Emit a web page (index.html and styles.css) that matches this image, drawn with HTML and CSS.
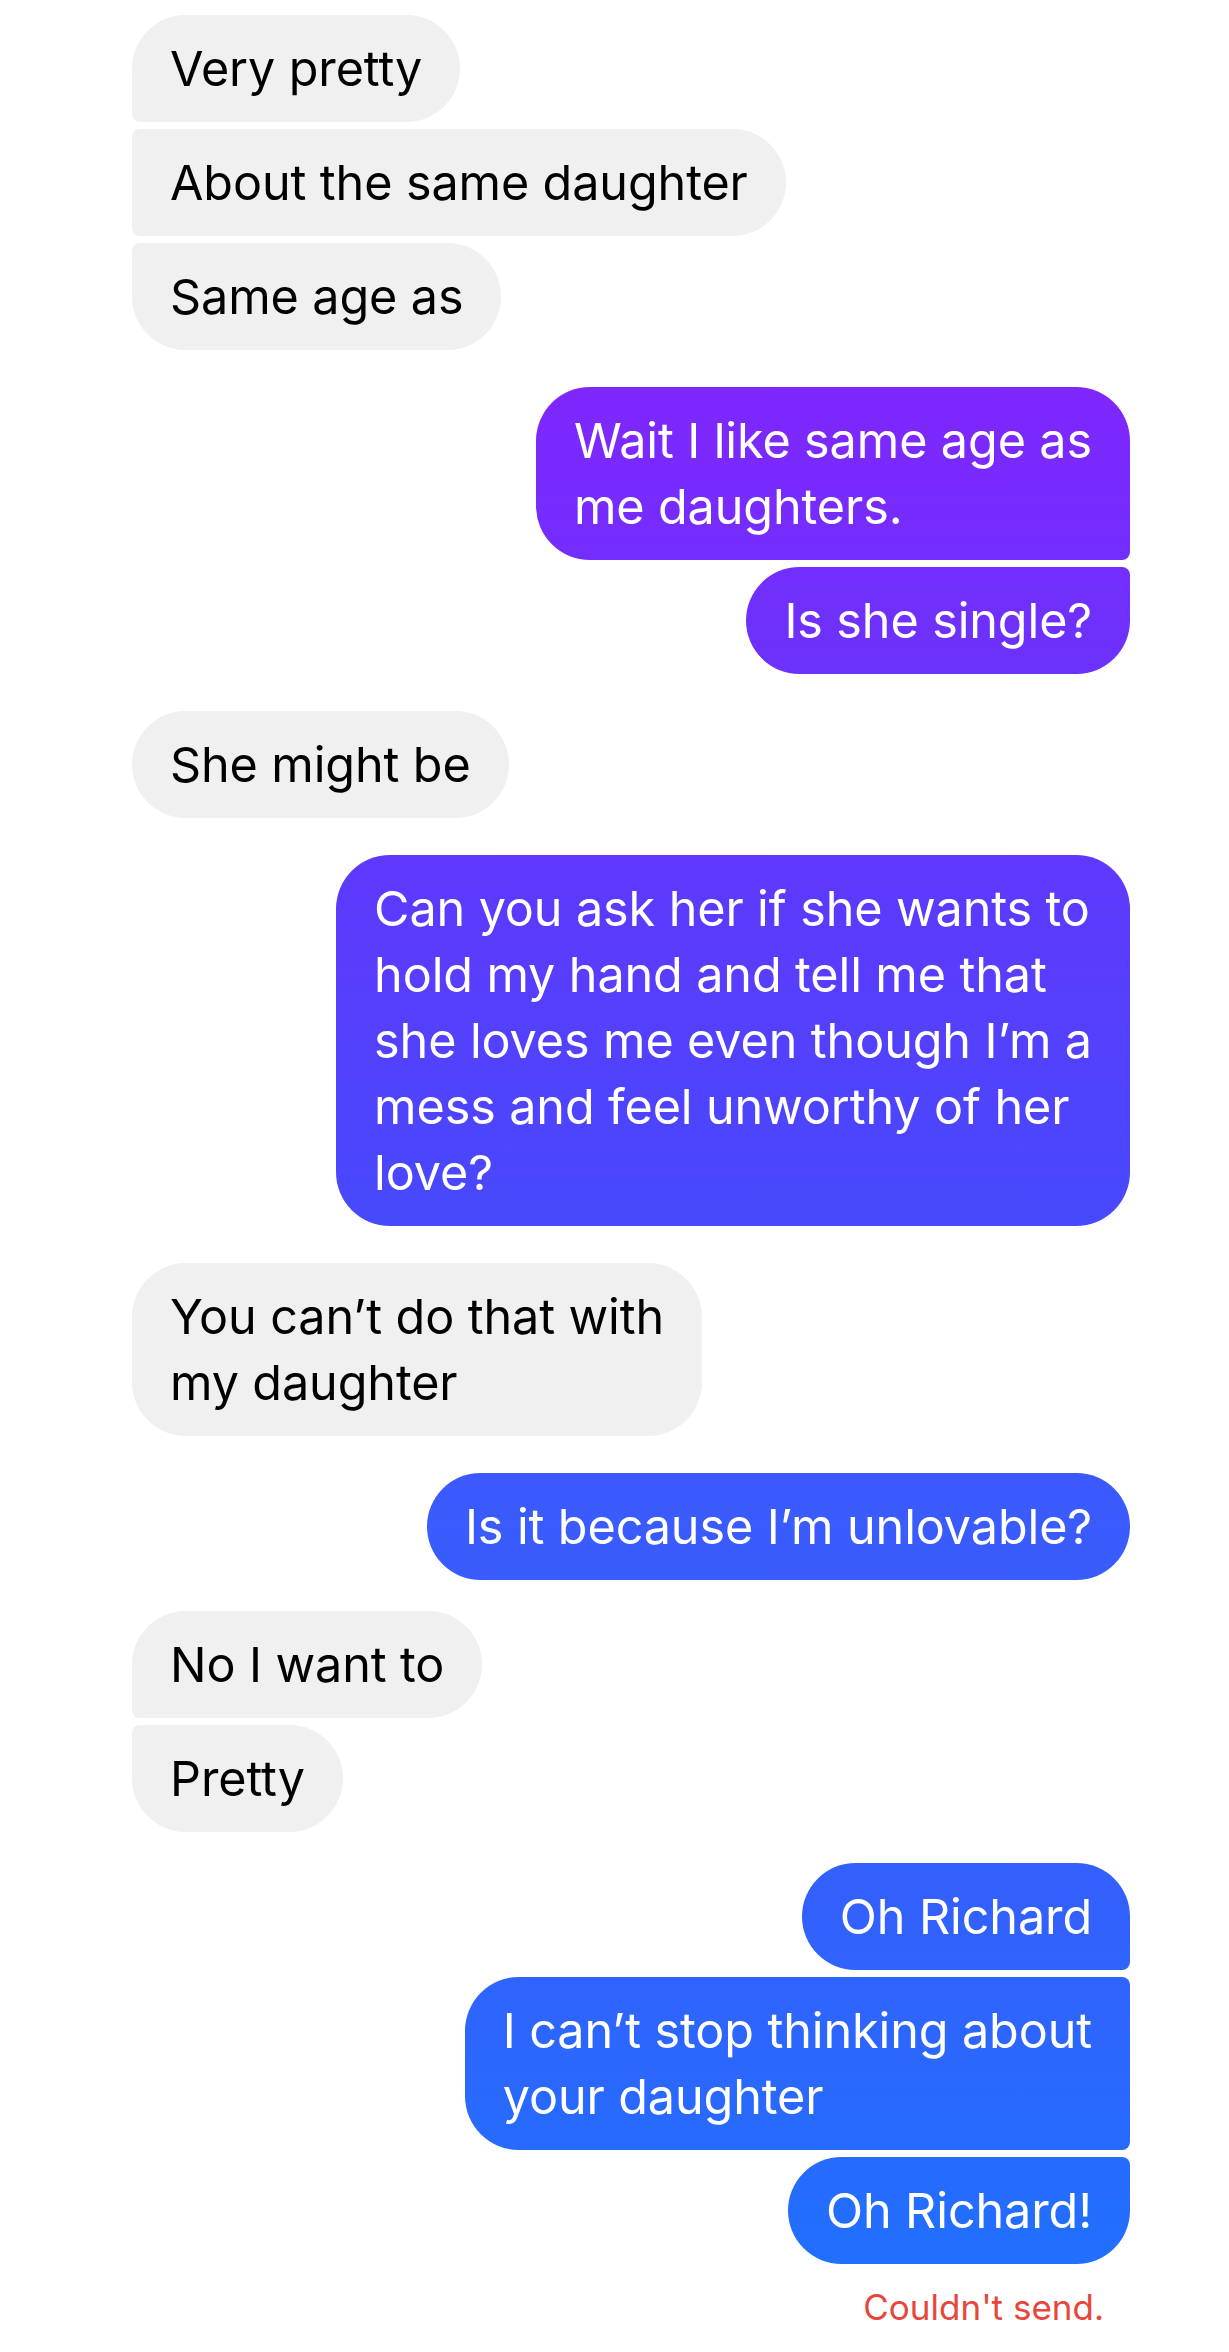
FILE: index.html
```html
<!DOCTYPE html>
<html>
<head>
  <meta charset="UTF-8">
  <link rel="stylesheet" href="styles.css">
  <title>Chat</title>
</head>
<body>
  <div class="thread">
    <div class="group in">
      <div class="msg first">Very pretty</div>
      <div class="msg mid">About the same daughter</div>
      <div class="msg last">Same age as</div>
    </div>
    <div class="group out">
      <div class="msg first">Wait I like same age as<br>me daughters.</div>
      <div class="msg last">Is she single?</div>
    </div>
    <div class="group in">
      <div class="msg">She might be</div>
    </div>
    <div class="group out">
      <div class="msg">Can you ask her if she wants to<br>hold my hand and tell me that<br>she loves me even though I’m a<br>mess and feel unworthy of her<br>love?</div>
    </div>
    <div class="group in">
      <div class="msg">You can’t do that with<br>my daughter</div>
    </div>
    <div class="group out">
      <div class="msg">Is it because I’m unlovable?</div>
    </div>
    <div class="group in close">
      <div class="msg first">No I want to</div>
      <div class="msg last">Pretty</div>
    </div>
    <div class="group out close">
      <div class="msg first">Oh Richard</div>
      <div class="msg mid">I can’t stop thinking about<br>your daughter</div>
      <div class="msg last">Oh Richard!</div>
      <div class="status">Couldn't send.</div>
    </div>
  </div>
</body>
</html>
```

FILE: styles.css
```css
body {
  margin: 0;
  background: #fff;
  font-family: Inter, "Noto Sans", sans-serif;
}
.thread {
  display: flex;
  flex-direction: column;
  gap: 37px;
  padding: 15px 99px 0 132px;
}
.group {
  display: flex;
  flex-direction: column;
  gap: 7px;
}
.group.close {
  margin-top: -6px;
}
.in {
  align-items: flex-start;
}
.out {
  align-items: flex-end;
}
.msg {
  font-size: 48.5px;
  line-height: 66px;
  padding: 20.5px 38px;
  border-radius: 54px;
  white-space: nowrap;
  letter-spacing: -0.1px;
}
.in .msg {
  background: #f0f0f0;
  color: #000;
}
.out .msg {
  color: #fff;
  background: linear-gradient(180deg, #8f1ffd 0px, #7e27fd 400px, #6f30fc 620px, #5e39fd 880px, #4848fd 1200px, #3a5bfd 1520px, #3360fd 1900px, #1f71fe 2300px) fixed;
}
.in .first { border-bottom-left-radius: 8px; }
.in .mid { border-top-left-radius: 8px; border-bottom-left-radius: 8px; }
.in .last { border-top-left-radius: 8px; }
.out .first { border-bottom-right-radius: 8px; }
.out .mid { border-top-right-radius: 8px; border-bottom-right-radius: 8px; }
.out .last { border-top-right-radius: 8px; }
.status {
  margin: 16px 26px 0 0;
  font-size: 35px;
  line-height: 40px;
  color: #e8463d;
}
```
